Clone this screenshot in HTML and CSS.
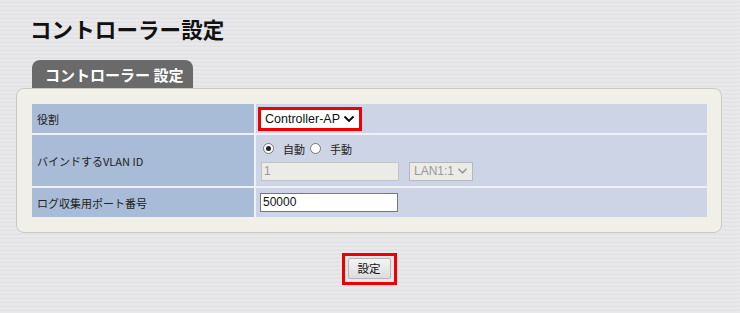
FILE: index.html
```html
<!DOCTYPE html>
<html lang="ja">
<head>
<meta charset="utf-8">
<link rel="stylesheet" href="styles.css">
</head>
<body>
<div class="page">
  <h1 class="title">コントローラー設定</h1>
  <div class="tab">コントローラー 設定</div>
  <div class="panel">
    <div class="grid">
      <div class="label">役割</div>
      <div class="value">
        <div class="redbox"><span class="sel">Controller-AP <svg class="chev" width="12" height="8" viewBox="0 0 12 8"><path d="M1.5 1.5 L6 6 L10.5 1.5" fill="none" stroke="#000" stroke-width="1.8"/></svg></span></div>
      </div>
      <div class="label">バインドするVLAN ID</div>
      <div class="value v2">
        <div class="radios">
          <span class="radio on"></span><span class="rlabel">自動</span>
          <span class="radio"></span><span class="rlabel">手動</span>
        </div>
        <div class="inputs">
          <span class="input dis">1</span>
          <span class="dsel">LAN1:1 <svg class="chev" width="12" height="8" viewBox="0 0 12 8"><path d="M1.5 1.5 L6 6 L10.5 1.5" fill="none" stroke="#9a9a9a" stroke-width="1.8"/></svg></span>
        </div>
      </div>
      <div class="label">ログ収集用ポート番号</div>
      <div class="value">
        <span class="input">50000</span>
      </div>
    </div>
  </div>
  <div class="btnwrap">
    <div class="btnred"><span class="btn">設定</span></div>
  </div>
</div>
</body>
</html>
```

FILE: styles.css
```css
html, body {
  margin: 0;
  padding: 0;
}
body {
  width: 740px;
  height: 313px;
  overflow: hidden;
  font-family: "Noto Sans CJK JP", "Liberation Sans", sans-serif;
  background-color: #e5e5e7;
  background-image: repeating-linear-gradient(180deg, #e9e9eb 0px, #e9e9eb 1px, #dedee0 2px, #e6e6e8 3px, #ececee 4px);
}
.page {
  padding-top: 13px;
}
.title {
  margin: 0 0 0 30px;
  font-size: 21.5px;
  line-height: 32px;
  font-weight: bold;
  color: #111;
  letter-spacing: 0.1px;
}
.tab {
  margin: 15px 0 0 32px;
  width: 161px;
  height: 28px;
  box-sizing: border-box;
  background: #6a6a6a;
  border-radius: 8px 8px 0 0;
  color: #fff;
  font-weight: bold;
  font-size: 15px;
  line-height: 29px;
  padding-left: 13px;
  white-space: nowrap;
}
.panel {
  margin: 0 18px 0 16px;
  background: #f0f0e9;
  border: 1px solid #c9c9c4;
  border-radius: 8px;
  padding: 15px 14px 15px 15px;
}
.grid {
  display: grid;
  grid-template-columns: 222px 1fr;
  grid-template-rows: 29px 51px 29px;
  gap: 2px;
  background: #eef1f7;
}
.label {
  background: #a8bcd7;
  font-size: 11px;
  color: #222;
  display: flex;
  align-items: center;
  padding-left: 5px;
}
.value {
  background: #ccd4e5;
  display: flex;
  align-items: center;
  padding-left: 4px;
}
.redbox {
  border: 3px solid #ee0000;
  background: #fff;
  height: 18px;
  display: flex;
  align-items: center;
  margin-left: -2px;
}
.sel {
  font-family: "Liberation Sans", sans-serif;
  font-size: 12.5px;
  color: #111;
  padding: 0 4px 0 4px;
  display: flex;
  align-items: center;
  gap: 3px;
}
.chev {
  display: block;
}
.v2 {
  flex-direction: column;
  align-items: flex-start;
  justify-content: center;
  padding-left: 5px;
}
.radios {
  display: flex;
  align-items: center;
  height: 16px;
  margin-bottom: 5px;
}
.radio {
  width: 11px;
  height: 11px;
  border: 1px solid #777;
  border-radius: 50%;
  background: #fff;
  box-sizing: border-box;
  position: relative;
  margin-left: 2px;
}
.radio.on::after {
  content: "";
  position: absolute;
  left: 2px;
  top: 2px;
  width: 5px;
  height: 5px;
  border-radius: 50%;
  background: #222;
}
.rlabel {
  font-size: 11px;
  color: #222;
  margin: 0 3px 0 9px;
}
.inputs {
  display: flex;
  align-items: center;
  gap: 10px;
}
.input {
  display: block;
  width: 138px;
  height: 19px;
  box-sizing: border-box;
  background: #fff;
  border: 1px solid #767676;
  font-family: "Liberation Sans", sans-serif;
  font-size: 12px;
  line-height: 17px;
  padding-left: 2px;
  color: #111;
}
.input.dis {
  background: #ebebe7;
  border-color: #c3c3c3;
  color: #9a9a9a;
}
.dsel {
  display: flex;
  align-items: center;
  gap: 3px;
  height: 19px;
  box-sizing: border-box;
  border: 1px solid #b8b8b8;
  background: #ebebe7;
  color: #9a9a9a;
  font-family: "Liberation Sans", sans-serif;
  font-size: 12px;
  padding: 0 4px;
  width: 64px;
}
.btnwrap {
  display: flex;
  justify-content: center;
  margin-top: 20px;
  padding-left: 0;
}
.btnred {
  border: 3px solid #ee0000;
  padding: 2px 3px 3px 3px;
  margin-left: -2px;
}
.btn {
  display: block;
  width: 43px;
  height: 21px;
  box-sizing: border-box;
  border: 1px solid #b5b5b5;
  border-radius: 2px;
  background: linear-gradient(#f4f4f4, #dcdcdc);
  font-size: 11.5px;
  line-height: 19px;
  text-align: center;
  color: #111;
}
```
